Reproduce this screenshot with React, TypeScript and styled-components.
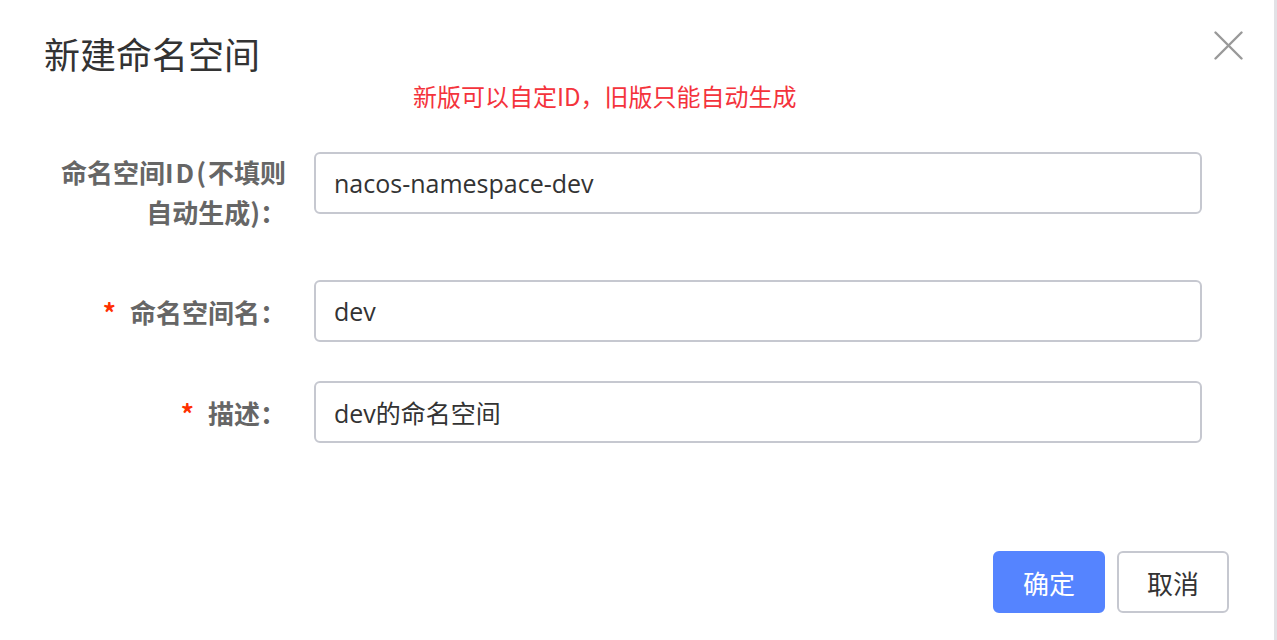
import React from "react";
import styled, { createGlobalStyle } from "styled-components";

const GlobalStyle = createGlobalStyle`
  html, body { margin: 0; padding: 0; background: #ffffff; }
  body {
    font-family: "Open Sans", "Noto Sans CJK SC", sans-serif;
    -webkit-font-smoothing: antialiased;
  }
  * { box-sizing: border-box; }
`;

const Page = styled.div`
  display: flex;
  width: 1277px;
  height: 640px;
  overflow: hidden;
`;

const Dialog = styled.div`
  position: relative;
  flex: 1;
  display: flex;
  flex-direction: column;
  background: #ffffff;
`;

const Edge = styled.div`
  width: 3px;
  background: #e2e2e6;
`;

const Title = styled.h1`
  margin: 0;
  padding: 35px 0 0 44px;
  font-size: 36px;
  line-height: 36px;
  font-weight: 400;
  color: #333333;
  font-family: "Noto Sans CJK SC", sans-serif;
`;

const CloseButton = styled.button`
  position: absolute;
  top: 31px;
  right: 31px;
  width: 29px;
  height: 29px;
  padding: 0;
  border: none;
  background: transparent;
  display: flex;
  align-items: center;
  justify-content: center;
`;

const Note = styled.div`
  margin: 13px 0 0 413px;
  font-size: 24px;
  line-height: 24px;
  color: #f4333c;
  font-family: "Noto Sans CJK SC", sans-serif;
`;

const Form = styled.div`
  display: flex;
  flex-direction: column;
  margin-top: 44px;
`;

const Row = styled.div<{ $gap: number }>`
  display: grid;
  grid-template-columns: 314px 888px;
  align-items: start;
  margin-bottom: ${(p) => p.$gap}px;
`;

const Label = styled.label<{ $lines?: number }>`
  padding-right: 28px;
  text-align: right;
  font-size: 26px;
  line-height: ${(p) => ((p.$lines ?? 1) > 1 ? 40 : 62)}px;
  font-weight: 700;
  color: #666666;
  font-family: "Noto Sans CJK SC", sans-serif;
  margin-top: ${(p) => ((p.$lines ?? 1) > 1 ? 0 : 1)}px;
  white-space: nowrap;
`;

const Latin = styled.span`
  letter-spacing: 2px;
`;

const Star = styled.span`
  color: #ff3000;
  margin-right: 14px;
`;

const Input = styled.div`
  height: 62px;
  border: 2px solid #c6c8d0;
  border-radius: 6px;
  padding: 0 18px;
  display: flex;
  align-items: center;
  font-size: 25px;
  color: #333333;
  font-family: "Open Sans", "Noto Sans CJK SC", sans-serif;
`;

const Footer = styled.div`
  margin-top: auto;
  display: flex;
  justify-content: flex-end;
  gap: 12px;
  padding: 0 45px 27px 0;
`;

const Button = styled.button<{ $primary?: boolean }>`
  width: 112px;
  height: 62px;
  border-radius: 6px;
  font-size: 26px;
  font-family: "Noto Sans CJK SC", sans-serif;
  border: 2px solid ${(p) => (p.$primary ? "#5584ff" : "#c6c8d0")};
  background: ${(p) => (p.$primary ? "#5584ff" : "#ffffff")};
  color: ${(p) => (p.$primary ? "#ffffff" : "#333333")};
  padding: 0;
  display: flex;
  align-items: center;
  justify-content: center;
`;

export default function App() {
  return (
    <Page>
      <GlobalStyle />
      <Dialog>
        <Title>新建命名空间</Title>
        <CloseButton aria-label="close">
          <svg width="29" height="29" viewBox="0 0 29 29">
            <line x1="1.5" y1="1.5" x2="27.5" y2="27.5" stroke="#999" strokeWidth="2.4" strokeLinecap="round" />
            <line x1="27.5" y1="1.5" x2="1.5" y2="27.5" stroke="#999" strokeWidth="2.4" strokeLinecap="round" />
          </svg>
        </CloseButton>
        <Note>新版可以自定ID，旧版只能自动生成</Note>
        <Form>
          <Row $gap={48}>
            <Label $lines={2}>
              命名空间<Latin>ID(</Latin>不填则
              <br />
              自动生成)：
            </Label>
            <Input>nacos-namespace-dev</Input>
          </Row>
          <Row $gap={38}>
            <Label>
              <Star>*</Star>命名空间名：
            </Label>
            <Input>dev</Input>
          </Row>
          <Row $gap={0}>
            <Label>
              <Star>*</Star>描述：
            </Label>
            <Input>dev的命名空间</Input>
          </Row>
        </Form>
        <Footer>
          <Button $primary>确定</Button>
          <Button>取消</Button>
        </Footer>
      </Dialog>
      <Edge />
    </Page>
  );
}
